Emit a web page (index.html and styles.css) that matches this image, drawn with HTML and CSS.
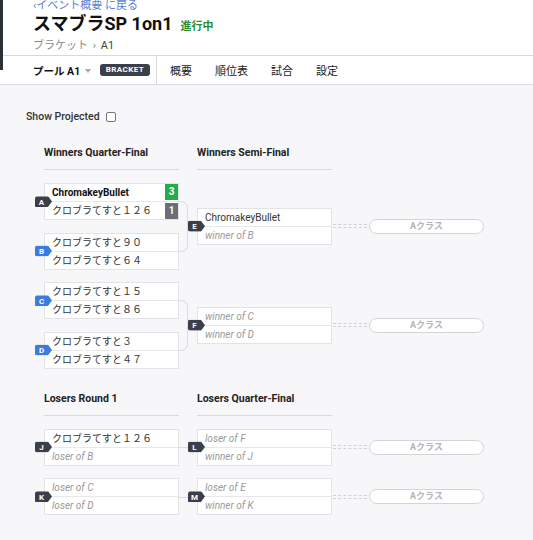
FILE: index.html
```html
<!DOCTYPE html>
<html lang="ja">
<head>
    <meta charset="UTF-8">
    <meta name="viewport" content="width=device-width, initial-scale=1.0">
    <title>スマブラSP 1on1 - ブラケット A1</title>
    <link rel="stylesheet" href="styles.css">
</head>
<body>

    <div class="edge"></div>

    <header class="page-head">
        <a class="back" href="#">‹イベント概要 に戻る</a>
        <h1>スマブラSP 1on1 <span class="status">進行中</span></h1>
        <div class="crumbs">ブラケット <span class="sep">›</span> <span class="cur">A1</span></div>
    </header>

    <nav class="tabs">
        <div class="pool">プール A1 <span class="caret"></span></div>
        <span class="tag">BRACKET</span>
        <div class="divider"></div>
        <a href="#">概要</a>
        <a href="#">順位表</a>
        <a href="#">試合</a>
        <a href="#">設定</a>
    </nav>

    <main class="content">
        <label class="projected">Show Projected <input type="checkbox"></label>

        <!-- winners side -->
        <section class="group winners">
            <div class="heads">
                <h2>Winners Quarter-Final</h2>
                <h2>Winners Semi-Final</h2>
            </div>
            <div class="rounds">
                <div class="col round">
                    <div class="pair">
                        <div class="match">
                            <span class="badge">A</span>
                            <div class="slot"><span class="name strong">ChromakeyBullet</span><span class="score win">3</span></div>
                            <div class="slot"><span class="name">クロブラてすと１２６</span><span class="score">1</span></div>
                        </div>
                        <div class="match">
                            <span class="badge blue">B</span>
                            <div class="slot"><span class="name">クロブラてすと９０</span></div>
                            <div class="slot"><span class="name">クロブラてすと６４</span></div>
                        </div>
                    </div>
                    <div class="pair">
                        <div class="match">
                            <span class="badge blue">C</span>
                            <div class="slot"><span class="name">クロブラてすと１５</span></div>
                            <div class="slot"><span class="name">クロブラてすと８６</span></div>
                        </div>
                        <div class="match">
                            <span class="badge blue">D</span>
                            <div class="slot"><span class="name">クロブラてすと３</span></div>
                            <div class="slot"><span class="name">クロブラてすと４７</span></div>
                        </div>
                    </div>
                </div>
                <div class="col round">
                    <div class="cell">
                        <div class="match">
                            <span class="badge">E</span>
                            <div class="slot"><span class="name">ChromakeyBullet</span></div>
                            <div class="slot"><span class="name tbd">winner of B</span></div>
                        </div>
                    </div>
                    <div class="cell">
                        <div class="match">
                            <span class="badge">F</span>
                            <div class="slot"><span class="name tbd">winner of C</span></div>
                            <div class="slot"><span class="name tbd">winner of D</span></div>
                        </div>
                    </div>
                </div>
                <div class="col">
                    <div class="cell"><div class="dash"></div><div class="pill">Aクラス</div></div>
                    <div class="cell"><div class="dash"></div><div class="pill">Aクラス</div></div>
                </div>
            </div>
        </section>

        <!-- losers side -->
        <section class="group losers">
            <div class="heads">
                <h2>Losers Round 1</h2>
                <h2>Losers Quarter-Final</h2>
            </div>
            <div class="rounds">
                <div class="col round">
                    <div class="match feed">
                        <span class="badge">J</span>
                        <div class="slot"><span class="name">クロブラてすと１２６</span></div>
                        <div class="slot"><span class="name tbd">loser of B</span></div>
                    </div>
                    <div class="match feed">
                        <span class="badge">K</span>
                        <div class="slot"><span class="name tbd">loser of C</span></div>
                        <div class="slot"><span class="name tbd">loser of D</span></div>
                    </div>
                </div>
                <div class="col round">
                    <div class="cell">
                        <div class="match">
                            <span class="badge">L</span>
                            <div class="slot"><span class="name tbd">loser of F</span></div>
                            <div class="slot"><span class="name tbd">winner of J</span></div>
                        </div>
                    </div>
                    <div class="cell">
                        <div class="match">
                            <span class="badge">M</span>
                            <div class="slot"><span class="name tbd">loser of E</span></div>
                            <div class="slot"><span class="name tbd">winner of K</span></div>
                        </div>
                    </div>
                </div>
                <div class="col">
                    <div class="cell"><div class="dash"></div><div class="pill">Aクラス</div></div>
                    <div class="cell"><div class="dash"></div><div class="pill">Aクラス</div></div>
                </div>
            </div>
        </section>
    </main>

</body>
</html>
```

FILE: styles.css
```css
body {
    font-family: Roboto, "Noto Sans CJK JP", sans-serif;
    margin: 0;
    color: #222;
    background-color: #f7f7f9;
}

.edge {
    position: absolute;
    left: 0;
    top: 0;
    width: 3px;
    height: 70px;
    background-color: #2b2f36;
}

/* page header */
.page-head {
    background-color: #fff;
    padding: 0 0 1px 33px;
    border-bottom: 1px solid #d9d9dd;
}

.back {
    display: block;
    height: 12px;
    margin-top: 0;
    font-size: 11px;
    line-height: 12px;
    color: #5a7fce;
    text-decoration: none;
}

h1 {
    display: flex;
    align-items: baseline;
    gap: 8px;
    height: 22px;
    margin: 1px 0 0;
    font-size: 18px;
    line-height: 22px;
    font-weight: bold;
    color: #111;
}

.status {
    font-size: 11px;
    color: #2e8b2e;
}

.crumbs {
    height: 16px;
    margin-top: 3px;
    font-size: 11px;
    line-height: 16px;
    color: #8a8a8a;
}

.crumbs .sep {
    margin: 0 2px;
}

.crumbs .cur {
    color: #444;
}

/* tabs */
.tabs {
    display: flex;
    align-items: center;
    height: 28px;
    padding-left: 33px;
    background-color: #fff;
    border-bottom: 1px solid #d9d9dd;
}

.pool {
    font-size: 10.5px;
    font-weight: bold;
    color: #111;
}

.caret {
    display: inline-block;
    margin-left: 2px;
    border-left: 3.5px solid transparent;
    border-right: 3.5px solid transparent;
    border-top: 4px solid #aaa;
    vertical-align: 2px;
}

.tag {
    margin-left: 9px;
    padding: 0 6px;
    height: 12px;
    line-height: 12px;
    border-radius: 3px;
    background-color: #3a3f4a;
    color: #fff;
    font-size: 8px;
    font-weight: bold;
    letter-spacing: 0.4px;
}

.divider {
    align-self: stretch;
    width: 1px;
    margin-left: 6px;
    margin-right: 1px;
    background-color: #d9d9dd;
}

.tabs a {
    padding: 0 11px 0 12px;
    font-size: 11px;
    color: #222;
    text-decoration: none;
}

/* bracket */
.content {
    padding: 25px 0 30px 26px;
}

.projected {
    display: flex;
    align-items: center;
    font-size: 10.5px;
    line-height: 13px;
    font-weight: 500;
    color: #333;
}

.projected input {
    appearance: none;
    width: 10px;
    height: 10px;
    margin: 1px 0 0 6px;
    border: 1px solid #777;
    border-radius: 2px;
    background-color: #fff;
}

.group {
    padding-left: 18px;
}

.winners {
    margin-top: 23px;
}

.losers {
    margin-top: 23px;
}

.heads {
    display: flex;
    gap: 18px;
    margin-bottom: 13px;
}

h2 {
    width: 135px;
    margin: 0;
    padding-bottom: 10px;
    border-bottom: 1px solid #dadade;
    font-size: 10.5px;
    line-height: 13px;
    font-weight: bold;
    color: #222;
}

.rounds {
    display: flex;
}

.col {
    display: flex;
    flex-direction: column;
    gap: 12.5px;
}

.col.round {
    margin-right: 18px;
}

.col.round + .col:not(.round) {
    margin-left: -18px;
}

.pair {
    position: relative;
    display: flex;
    flex-direction: column;
    gap: 12.5px;
}

.pair::after {
    content: "";
    position: absolute;
    left: 100%;
    top: 18px;
    bottom: 18px;
    width: 8px;
    border: 1px solid #dcdcdf;
    border-left: none;
    border-radius: 0 7px 7px 0;
}

.cell {
    display: flex;
    align-items: center;
}

.winners .cell {
    height: 86.5px;
}

.losers .cell {
    height: 37px;
}

.match {
    position: relative;
    width: 133px;
    background-color: #fff;
    border: 1px solid #e3e3e6;
}

.match.feed::after {
    content: "";
    position: absolute;
    left: 100%;
    top: 50%;
    width: 19px;
    height: 1px;
    background-color: #dcdcdf;
}

.slot {
    display: flex;
    align-items: stretch;
    height: 17px;
}

.slot + .slot {
    border-top: 1px solid #e8e8eb;
}

.name {
    flex: 1;
    padding-left: 7px;
    font-size: 10px;
    line-height: 17px;
    color: #333;
    white-space: nowrap;
}

.name.strong {
    font-weight: bold;
    color: #111;
}

.name.tbd {
    font-style: italic;
    color: #999;
}

.score {
    width: 13px;
    margin: 0 0 1px;
    background-color: #6a6e77;
    color: #fff;
    font-size: 10px;
    font-weight: bold;
    text-align: center;
    line-height: 16px;
}

.score.win {
    background-color: #22ad4a;
}

.slot + .slot .score {
    margin: 1px 0 0;
}

.badge {
    position: absolute;
    left: -10px;
    top: 50%;
    transform: translateY(-50%);
    width: 13px;
    padding-right: 4px;
    height: 11px;
    line-height: 11px;
    text-align: center;
    font-size: 8px;
    font-weight: bold;
    color: #fff;
    background-color: #3a3f4b;
    clip-path: polygon(0 0, 76% 0, 100% 50%, 76% 100%, 0 100%);
    border-radius: 2px 0 0 2px;
    z-index: 1;
}

.badge.blue {
    background-color: #3b7ce0;
}

.dash {
    width: 34px;
    height: 2px;
    margin-left: 1px;
    border-top: 1px dashed #d2d2d6;
    border-bottom: 1px dashed #d2d2d6;
}

.pill {
    width: 113px;
    height: 13px;
    margin-left: 2px;
    border: 1px solid #d4d4d8;
    border-radius: 8px;
    background-color: #fff;
    text-align: center;
    font-size: 9px;
    line-height: 13px;
    font-weight: bold;
    color: #b4b4b8;
}
```
